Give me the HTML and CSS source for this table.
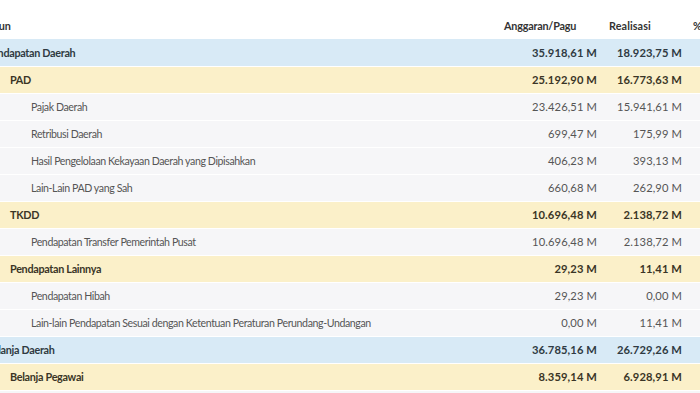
FILE: index.html
```html
<!DOCTYPE html>
<html lang="id">
<head>
<meta charset="utf-8">
<title>Realisasi APBD</title>
<link rel="stylesheet" href="styles.css">
</head>
<body>
<div class="scroller">
<table class="apbd">
  <colgroup>
    <col class="c-akun"><col class="c-ang"><col class="c-real"><col class="c-pct">
  </colgroup>
  <thead>
    <tr><th class="akun">Akun</th><th class="ang">Anggaran/Pagu</th><th class="real">Realisasi</th><th class="pct">%</th></tr>
  </thead>
  <tbody>
    <tr class="lv0"><td class="akun">Pendapatan Daerah</td><td class="num">35.918,61 M</td><td class="num">18.923,75 M</td><td class="num"></td></tr>
    <tr class="lv1"><td class="akun">PAD</td><td class="num">25.192,90 M</td><td class="num">16.773,63 M</td><td class="num"></td></tr>
    <tr class="lv2"><td class="akun">Pajak Daerah</td><td class="num">23.426,51 M</td><td class="num">15.941,61 M</td><td class="num"></td></tr>
    <tr class="lv2"><td class="akun">Retribusi Daerah</td><td class="num">699,47 M</td><td class="num">175,99 M</td><td class="num"></td></tr>
    <tr class="lv2"><td class="akun">Hasil Pengelolaan Kekayaan Daerah yang Dipisahkan</td><td class="num">406,23 M</td><td class="num">393,13 M</td><td class="num"></td></tr>
    <tr class="lv2"><td class="akun">Lain-Lain PAD yang Sah</td><td class="num">660,68 M</td><td class="num">262,90 M</td><td class="num"></td></tr>
    <tr class="lv1"><td class="akun">TKDD</td><td class="num">10.696,48 M</td><td class="num">2.138,72 M</td><td class="num"></td></tr>
    <tr class="lv2"><td class="akun">Pendapatan Transfer Pemerintah Pusat</td><td class="num">10.696,48 M</td><td class="num">2.138,72 M</td><td class="num"></td></tr>
    <tr class="lv1"><td class="akun">Pendapatan Lainnya</td><td class="num">29,23 M</td><td class="num">11,41 M</td><td class="num"></td></tr>
    <tr class="lv2"><td class="akun">Pendapatan Hibah</td><td class="num">29,23 M</td><td class="num">0,00 M</td><td class="num"></td></tr>
    <tr class="lv2"><td class="akun">Lain-lain Pendapatan Sesuai dengan Ketentuan Peraturan Perundang-Undangan</td><td class="num">0,00 M</td><td class="num">11,41 M</td><td class="num"></td></tr>
    <tr class="lv0"><td class="akun">Belanja Daerah</td><td class="num">36.785,16 M</td><td class="num">26.729,26 M</td><td class="num"></td></tr>
    <tr class="lv1"><td class="akun">Belanja Pegawai</td><td class="num">8.359,14 M</td><td class="num">6.928,91 M</td><td class="num"></td></tr>
    <tr class="lv2"><td class="akun">Belanja Barang dan Jasa</td><td class="num">9.612,40 M</td><td class="num">6.512,07 M</td><td class="num"></td></tr>
  </tbody>
</table>
</div>
</body>
</html>
```

FILE: styles.css
```css
html, body {
  margin: 0;
  padding: 0;
  background: #ffffff;
  overflow: hidden;
}

body {
  font-family: Lato, "Open Sans", sans-serif;
  font-size: 10.6px;
  color: #4a4a4a;
}

.scroller {
  width: 700px;
  height: 393px;
  overflow: hidden;
}

.apbd {
  margin-left: -22px;
  width: 772px;
  table-layout: fixed;
  border-collapse: collapse;
}

.c-akun { width: 518px; }
.c-ang { width: 109px; }
.c-real { width: 85px; }
.c-pct { width: 60px; }

.apbd th {
  height: 39px;
  padding: 12px 0 0 0;
  text-align: left;
  font-size: 10.8px;
  letter-spacing: -0.2px;
  font-weight: 700;
  color: #333333;
  vertical-align: middle;
  box-sizing: border-box;
  white-space: nowrap;
}

.apbd th.akun { padding-left: 8px; }
.apbd th.ang { padding-left: 8px; }
.apbd th.real { padding-left: 4px; letter-spacing: 0.1px; }
.apbd th.pct { padding-left: 3px; }

.apbd td {
  height: 27px;
  padding: 0;
  box-sizing: border-box;
  white-space: nowrap;
  vertical-align: middle;
  border-bottom: 1px solid #ffffff;
}

.apbd td.num {
  text-align: right;
  padding-right: 8px;
  font-size: 11.2px;
  letter-spacing: 0.1px;
}

.lv0 td {
  background: #d8eaf6;
  font-weight: 700;
  color: #2f3a42;
}
.lv0 td.akun { padding-left: 8px; font-size: 10.8px; letter-spacing: -0.3px; }

.lv1 td {
  background: #fbf0c9;
  font-weight: 700;
  color: #3a3526;
}
.lv1 td.akun { padding-left: 32px; font-size: 10.8px; letter-spacing: -0.3px; }

.lv2 td {
  background: #f6f6f8;
  color: #555555;
}
.lv2 td.akun { padding-left: 53px; font-size: 10.6px; letter-spacing: -0.4px; }
```
